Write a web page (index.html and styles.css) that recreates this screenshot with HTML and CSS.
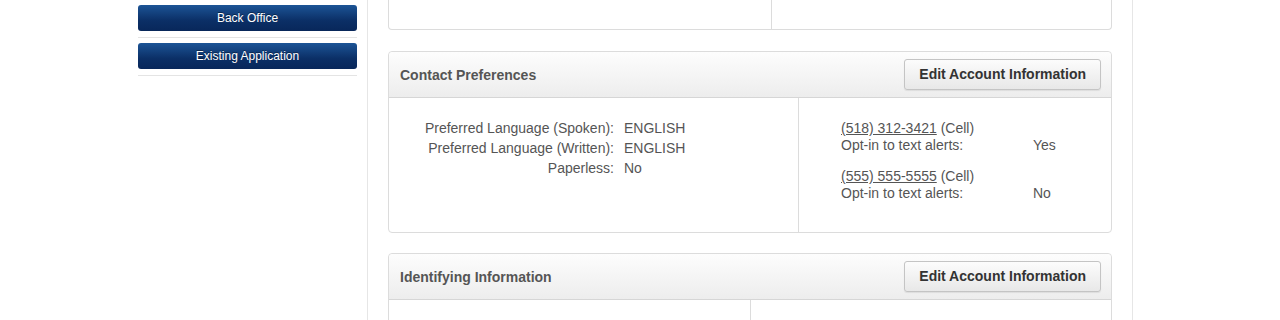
FILE: index.html
```html
<!DOCTYPE html>
<html>
  <head>
    <title>Account Summary</title>
    <link rel="stylesheet" href="styles.css">
  </head>
  <body>
    <div class="page">
      <div class="sidebar">
        <div class="nav-item">
          <a href="#" class="nav-button">Back Office</a>
        </div>
        <div class="nav-item">
          <a href="#" class="nav-button">Existing Application</a>
        </div>
      </div>

      <div class="main-content">
        <div class="panel panel-tail">
          <div class="panel-body cols-top">
            <div class="col"></div>
            <div class="col"></div>
          </div>
        </div>

        <div class="panel">
          <div class="panel-heading">
            <span class="panel-title">Contact Preferences</span>
            <a href="#" class="edit-button">Edit Account Information</a>
          </div>
          <div class="panel-body cols-contact">
            <div class="col">
              <div class="pref-list">
                <span class="pref-label">Preferred Language (Spoken):</span>
                <span class="pref-value">ENGLISH</span>
                <span class="pref-label">Preferred Language (Written):</span>
                <span class="pref-value">ENGLISH</span>
                <span class="pref-label">Paperless:</span>
                <span class="pref-value">No</span>
              </div>
            </div>
            <div class="col">
              <div class="phone">
                <div><a href="#" class="phone-link">(518) 312-3421</a> (Cell)</div>
                <div class="phone-alert">
                  <span>Opt-in to text alerts:</span>
                  <span>Yes</span>
                </div>
              </div>
              <div class="phone">
                <div><a href="#" class="phone-link">(555) 555-5555</a> (Cell)</div>
                <div class="phone-alert">
                  <span>Opt-in to text alerts:</span>
                  <span>No</span>
                </div>
              </div>
            </div>
          </div>
        </div>

        <div class="panel">
          <div class="panel-heading">
            <span class="panel-title">Identifying Information</span>
            <a href="#" class="edit-button">Edit Account Information</a>
          </div>
          <div class="panel-body cols-ident">
            <div class="col"></div>
            <div class="col"></div>
          </div>
        </div>
      </div>
    </div>
  </body>
</html>
```

FILE: styles.css
```css
body {
  margin: 0;
  padding: 0;
  background-color: #fff;
  color: #555;
  font-family: "Liberation Sans", Arial, sans-serif;
  font-size: 14px;
}

.page {
  display: flex;
  align-items: flex-start;
  padding-left: 138px;
}

.sidebar {
  width: 219px;
  padding-top: 5px;
  margin-right: 10px;
}

.nav-item {
  padding-bottom: 6px;
  border-bottom: 1px solid #e4e4e4;
  margin-bottom: 5px;
}

.nav-button {
  display: block;
  height: 26px;
  line-height: 27px;
  text-align: center;
  color: #fff;
  font-size: 12px;
  text-decoration: none;
  border-radius: 3px;
  background-image: linear-gradient(to bottom, #1c5496, #0b2f66 60%, #08275a);
  text-shadow: 0 -1px 0 rgba(0, 0, 0, 0.4);
}

.main-content {
  width: 724px;
  padding: 0 20px 40px 20px;
  border-left: 1px solid #e6e6e6;
  border-right: 1px solid #e6e6e6;
}

.panel {
  border: 1px solid #dcdcdc;
  border-radius: 4px;
  margin-bottom: 20px;
  background-color: #fff;
}

.panel-tail {
  border-top: 0;
  border-radius: 0 0 4px 4px;
  margin-bottom: 21px;
}

.panel-heading {
  display: flex;
  justify-content: space-between;
  align-items: center;
  height: 45px;
  padding: 0 10px 0 11px;
  border-bottom: 1px solid #d6d6d6;
  border-radius: 4px 4px 0 0;
  background-image: linear-gradient(to bottom, #fdfdfd, #ededed);
}

.panel-title {
  font-weight: bold;
  color: #555;
}

.edit-button {
  display: block;
  height: 29px;
  line-height: 29px;
  margin-top: -1px;
  padding: 0 14px;
  font-weight: bold;
  color: #333;
  text-decoration: none;
  border: 1px solid #c4c4c4;
  border-radius: 3px;
  background-image: linear-gradient(to bottom, #fcfcfc, #e8e8e8);
  box-shadow: 0 1px 1px rgba(0, 0, 0, 0.08);
}

.panel-body {
  display: grid;
}

.panel-body .col + .col {
  border-left: 1px solid #dcdcdc;
}

.cols-top {
  height: 29px;
  grid-template-columns: 382px 1fr;
}

.cols-contact {
  height: 134px;
  grid-template-columns: 409px 1fr;
}

.cols-ident {
  height: 30px;
  grid-template-columns: 361px 1fr;
}

.pref-list {
  display: grid;
  grid-template-columns: 225px 1fr;
  column-gap: 10px;
  line-height: 20px;
  padding-top: 20px;
}

.pref-label {
  text-align: right;
}

.cols-contact .col + .col {
  padding: 22px 0 0 42px;
  line-height: 17px;
}

.phone {
  margin-bottom: 14px;
}

.phone-link {
  color: #555;
  text-decoration: underline;
}

.phone-alert {
  display: grid;
  grid-template-columns: 192px 1fr;
}
```
